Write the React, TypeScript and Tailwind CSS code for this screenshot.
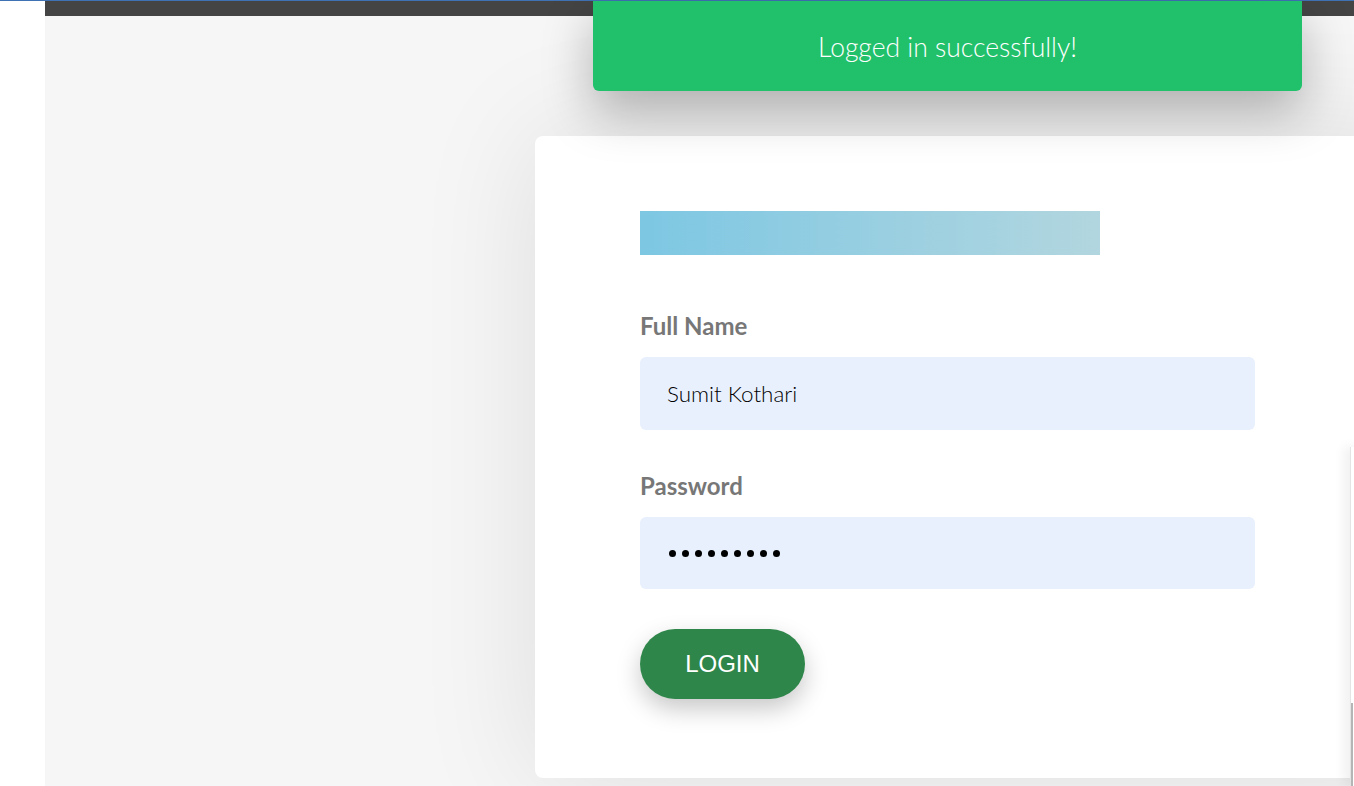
import React from "react";

export default function App() {
  return (
    <div
      className="relative w-[1354px] h-[786px] overflow-hidden bg-white"
      style={{ fontFamily: "Lato, 'Open Sans', sans-serif" }}
    >
      <div className="h-px w-full bg-[#3f72b5]" />
      <div className="flex h-[785px]">
        <div className="w-[45px] shrink-0 bg-white" />
        <div className="flex-1 min-w-0 flex flex-col bg-[#f6f6f6]">
          <div className="h-[15px] shrink-0 bg-[#444444]" />
          <div className="flex-1 pl-[490px] pt-[120px]">
            <div className="w-[900px] h-[642px] bg-white rounded-[8px] shadow-[0_0_120px_rgba(0,0,0,0.1)] pl-[105px] pt-[75px]">
              <div className="w-[460px] h-[44px] bg-[linear-gradient(to_right,#7dc7e3,#b2d6df)]" />
              <div className="mt-[57px] h-[28px] text-[24px] leading-[28px] font-bold text-[#777777]">
                Full Name
              </div>
              <div className="mt-[17px] w-[615px] h-[73px] rounded-[6px] bg-[#e8f0fe] pl-[27px] flex items-center text-[22.4px] font-light text-black">
                Sumit Kothari
              </div>
              <div className="mt-[42px] h-[28px] text-[24px] leading-[28px] font-bold text-[#777777]">
                Password
              </div>
              <div className="mt-[17px] w-[615px] h-[72px] rounded-[6px] bg-[#e8f0fe] pl-[29px] flex items-center gap-[6px]">
                {Array.from({ length: 9 }).map((_, i) => (
                  <span key={i} className="block w-[7px] h-[7px] rounded-full bg-black" />
                ))}
              </div>
              <button
                className="mt-[40px] w-[165px] h-[70px] rounded-full bg-[#2e864a] text-white text-[24px] shadow-[0_10px_25px_rgba(0,0,0,0.22)]"
                style={{ fontFamily: "'Liberation Sans', Arial, sans-serif" }}
              >
                LOGIN
              </button>
            </div>
          </div>
        </div>
      </div>

      {/* right edge panel */}
      <div className="absolute left-[1350px] top-[447px] w-[20px] h-[339px] bg-white shadow-[-6px_0_12px_rgba(0,0,0,0.06)] border-l border-[#e4e4e4]">
        <div className="absolute left-0 top-[256px] w-[2px] h-[83px] bg-[#b5b5b5]" />
      </div>

      {/* toast */}
      <div className="absolute left-[593px] top-px w-[709px] h-[90px] pt-[4px] bg-[#21c16b] rounded-b-[6px] shadow-[0_20px_50px_rgba(0,0,0,0.28)] flex items-center justify-center text-white text-[26.5px] font-light">
        Logged in successfully!
      </div>
    </div>
  );
}
